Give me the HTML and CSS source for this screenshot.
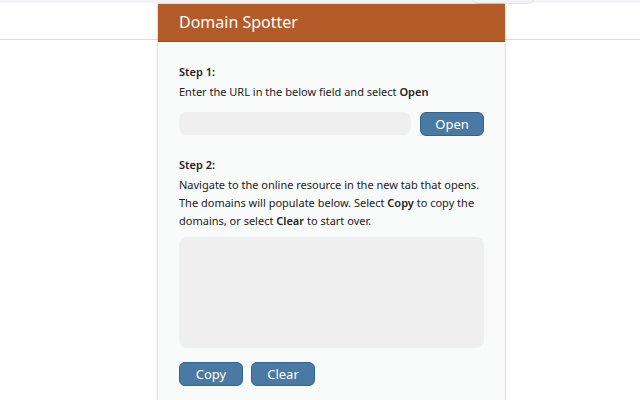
FILE: index.html
```html
<!DOCTYPE html>
<html lang="en">
<head>
  <meta charset="UTF-8">
  <title>Domain Spotter</title>
  <link rel="stylesheet" href="styles.css">
</head>
<body>
  <!-- Browser page behind the popup -->
  <div class="page">
    <div class="topstrip"></div>
    <div class="omnibox"></div>
    <div class="toolbar-line"></div>
  </div>

  <!-- Extension popup -->
  <div class="popup">
    <div class="header">Domain Spotter</div>
    <div class="content">
      <h3>Step 1:</h3>
      <p>Enter the URL in the below field and select <b>Open</b></p>
      <div class="url-row">
        <input type="text" class="url-input">
        <button class="btn">Open</button>
      </div>

      <h3>Step 2:</h3>
      <p class="step2-text">Navigate to the online resource in the new tab that opens. The domains will populate below. Select <b>Copy</b> to copy the domains, or select <b>Clear</b> to start over.</p>
      <textarea class="domains"></textarea>
      <div class="actions">
        <button class="btn">Copy</button>
        <button class="btn">Clear</button>
      </div>
    </div>
  </div>
</body>
</html>
```

FILE: styles.css
```css
body {
  margin: 0;
  background: #fff;
  font-family: "Noto Sans", "Open Sans", sans-serif;
  overflow: hidden;
  height: 400px;
}
.page {
  position: relative;
  height: 400px;
}
.topstrip {
  height: 3px;
  background: #f1f3f4;
}
.omnibox {
  position: absolute;
  left: 470px;
  top: -14px;
  width: 64px;
  height: 16px;
  border: 1px solid #e2e2e2;
  border-radius: 10px;
}
.toolbar-line {
  position: absolute;
  left: 0;
  right: 0;
  top: 39px;
  height: 1px;
  background: #dcdcdc;
}
.popup {
  position: absolute;
  left: 158px;
  top: 4px;
  width: 347px;
  height: 400px;
  background: #f9fafa;
  box-shadow: 0 0 2px rgba(0, 0, 0, 0.35);
}
.header {
  background: #b35a29;
  border-bottom: 1px solid #b8400c;
  color: #fff;
  font-size: 16px;
  height: 37px;
  line-height: 37px;
  padding-left: 21px;
}
.content {
  padding: 21px 21px 0 21px;
}
h3 {
  font-size: 11px;
  font-weight: 600;
  color: #222;
  margin: 0 0 2px 0;
  line-height: 18px;
}
p {
  font-size: 11px;
  color: #222;
  margin: 0 0 11px 0;
  line-height: 18px;
}
.step2-text {
  margin-bottom: 7px;
}
b {
  font-weight: 600;
}
.url-row {
  display: flex;
  gap: 9px;
  margin-bottom: 20px;
}
.url-input {
  flex: 1;
  height: 23px;
  border: none;
  border-radius: 8px;
  background: #efefef;
  padding: 0;
}
.btn {
  width: 64px;
  height: 24px;
  background: #4a7aa4;
  border: 1px solid #2e6592;
  border-radius: 6px;
  color: #fff;
  font-family: "Noto Sans", "Open Sans", sans-serif;
  font-size: 13px;
  padding: 0;
}
.domains {
  display: block;
  width: 100%;
  box-sizing: border-box;
  height: 111px;
  border: none;
  border-radius: 8px;
  background: #efefef;
  resize: none;
  margin: 0 0 14px 0;
}
.actions {
  display: flex;
  gap: 8px;
}
```
